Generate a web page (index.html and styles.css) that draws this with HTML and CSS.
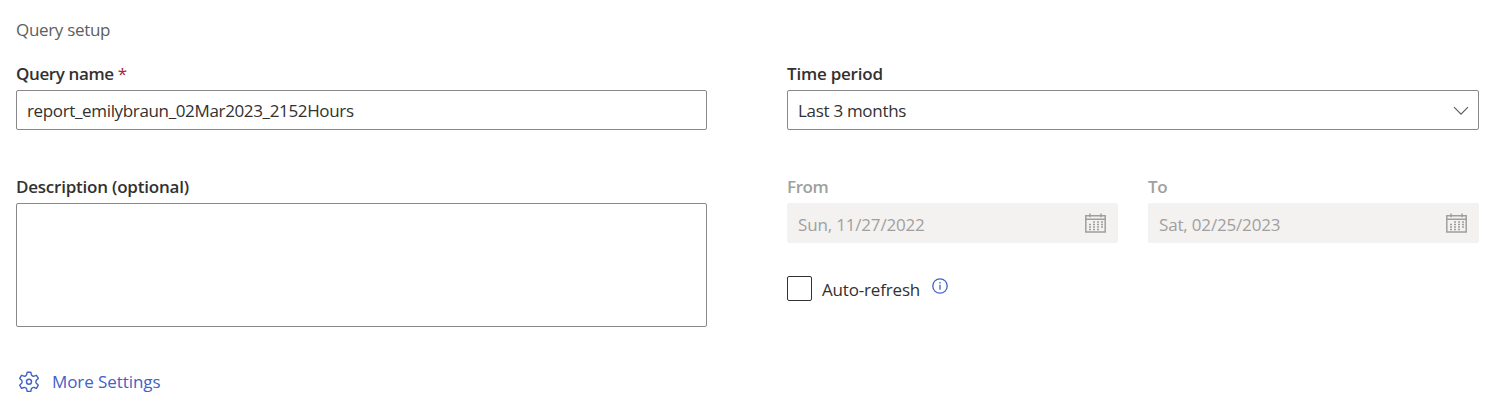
FILE: index.html
```html
<!DOCTYPE html>
<html lang="en">
<head>
<meta charset="utf-8">
<title>Query setup</title>
<link rel="stylesheet" href="styles.css">
</head>
<body>
<main class="setup">
  <h1 class="title"><span class="t-title">Query setup</span></h1>
  <div class="columns">
    <section class="column">
      <div class="label"><span class="t-name">Query name</span><span class="required">*</span></div>
      <div class="field"><span class="t-report">report_emilybraun_02Mar2023_2152Hours</span></div>
      <div class="label label-second"><span class="t-desc">Description (optional)</span></div>
      <div class="field area"></div>
      <a class="more">
        <svg class="gear" width="22" height="22" viewBox="0 0 22 22"><path d="M9.2 1.2h3.6l.6 2.6q.2.7.9 1l.4.2q.7.3 1.3.1l2.5-.8 1.8 3.1-1.9 1.9q-.5.5-.5 1.1v.8q0 .6.5 1.1l1.9 1.9-1.8 3.1-2.5-.8q-.6-.2-1.3.1l-.4.2q-.7.3-.9 1l-.6 2.6H9.2l-.6-2.6q-.2-.7-.9-1l-.4-.2q-.7-.3-1.3-.1l-2.5.8-1.8-3.1 1.9-1.9q.5-.5.5-1.1v-.8q0-.6-.5-1.1L1.7 7.4l1.8-3.1 2.5.8q.6.2 1.3-.1l.4-.2q.7-.3.9-1z"/><circle cx="11" cy="10.8" r="2.5"/></svg>
        <span class="t-more">More Settings</span>
      </a>
    </section>
    <section class="column">
      <div class="label"><span class="t-time">Time period</span></div>
      <div class="field select"><span class="t-last">Last 3 months</span>
        <svg class="chevron" width="16" height="10" viewBox="0 0 16 10"><path d="M1 1.2l7 7 7-7"/></svg>
      </div>
      <div class="dates">
        <div>
          <div class="label label-second muted"><span class="t-from">From</span></div>
          <div class="field disabled"><span class="t-sun">Sun, 11/27/2022</span>
            <svg class="calendar" width="21" height="20" viewBox="0 0 21 20"><path d="M.8 2.8h19.4v16.2H.8zM.8 6.2h19.4M5 .6v3.600M16 .6v3.600"/><path class="dots" d="M8 9h10M4 11.500h14M4 14h14M4 16.500h10"/></svg>
          </div>
        </div>
        <div>
          <div class="label label-second muted"><span class="t-to">To</span></div>
          <div class="field disabled"><span class="t-sat">Sat, 02/25/2023</span>
            <svg class="calendar" width="21" height="20" viewBox="0 0 21 20"><path d="M.8 2.8h19.4v16.2H.8zM.8 6.2h19.4M5 .6v3.600M16 .6v3.600"/><path class="dots" d="M8 9h10M4 11.500h14M4 14h14M4 16.500h10"/></svg>
          </div>
        </div>
      </div>
      <div class="refresh">
        <span class="checkbox"></span>
        <span class="t-auto">Auto-refresh</span>
        <svg class="info" width="16" height="16" viewBox="0 0 16 16"><circle cx="8" cy="8" r="7.2"/><path d="M8 6.8v5M8 4v1.5"/></svg>
      </div>
    </section>
  </div>
</main>
</body>
</html>
```
FILE: styles.css
```css
* { box-sizing: border-box; }
body { margin: 0; background: #fff; color: #323130; font: 17px/24px "Open Sans", "Noto Sans", sans-serif; }
.setup { height: 410px; padding: 18px 25px 0 16px; overflow: hidden; white-space: nowrap; }
.title { margin: 0; height: 44px; font-size: 17px; font-weight: 400; color: #605e5c; }
.columns { display: grid; grid-template-columns: 691px 692px; column-gap: 80px; }
.label { height: 28px; font-weight: 600; display: flex; }
.label-second { margin-top: 45px; }
.required { color: #a4262c; margin-left: 4px; font-weight: 400; }
.muted { color: #a19f9d; }
.field { height: 40px; border: 1px solid #8a8886; border-radius: 2px; padding: 2px 10px 0; display: flex; align-items: center; }
.area { height: 124px; }
.select { justify-content: space-between; padding-right: 9px; }
.chevron { fill: none; stroke: #605e5c; stroke-width: 1.2; }
.dates { display: grid; grid-template-columns: 331px 331px; column-gap: 30px; }
.disabled { background: #f3f2f1; border-color: #f3f2f1; color: #a19f9d; justify-content: space-between; padding: 3px 11px 0 10px; }
.calendar { fill: none; stroke: #a19f9d; stroke-width: 1.5; margin-top: -3px; }
.dots { stroke-width: 1.6; stroke-dasharray: 2 2; }
.refresh { display: flex; height: 26px; margin-top: 32px; align-items: center; }
.checkbox { width: 25px; height: 25px; border: 1px solid #323130; border-radius: 2px; margin-right: 10px; }
.info { fill: none; stroke: #4262c5; stroke-width: 1.3; margin: -4px 0 0 12px; }
.more { display: flex; align-items: center; height: 26px; margin: 42px 0 0 2px; color: #4262c5; }
.gear { fill: none; stroke: #4262c5; stroke-width: 1.4; stroke-linejoin: round; margin-right: 12px; }
.t-title { letter-spacing: -.32px; }
.t-name { letter-spacing: -.38px; }
.t-report { letter-spacing: -.35px; }
.t-desc { letter-spacing: -.22px; }
.t-time { letter-spacing: -.22px; }
.t-last { letter-spacing: -.3px; }
.t-from, .t-to { letter-spacing: -.4px; }
.t-sun, .t-sat { letter-spacing: -.17px; }
.t-auto { width: 98px; padding-top: 3px; letter-spacing: -.17px; }
.t-more { letter-spacing: -.08px; }
```
